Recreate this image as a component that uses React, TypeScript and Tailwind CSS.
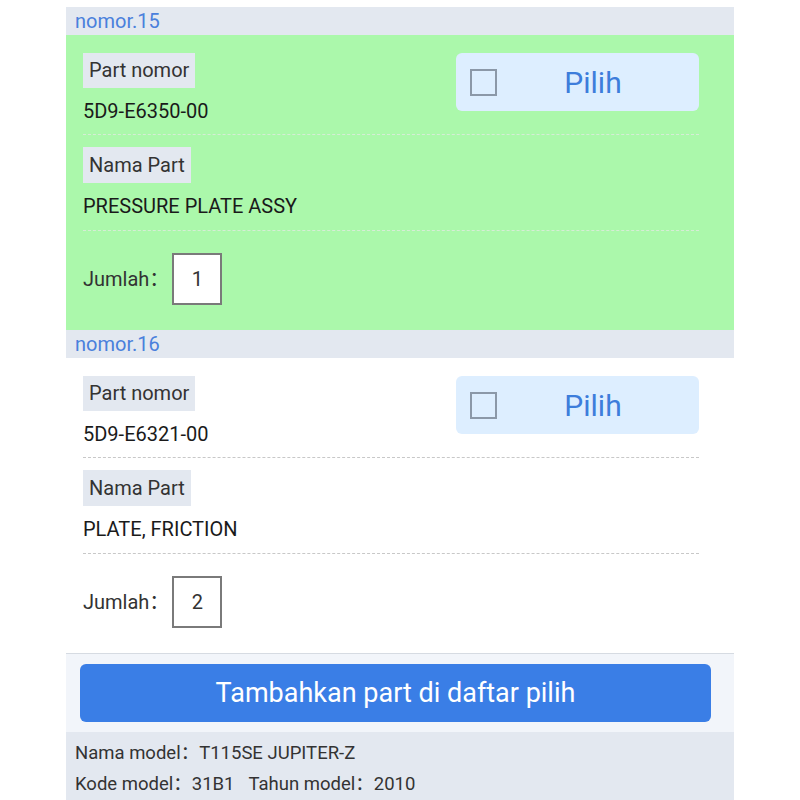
import React from 'react';

type Part = {
  no: number;
  partNo: string;
  name: string;
  qty: number;
  selected: boolean;
};

const parts: Part[] = [
  { no: 15, partNo: '5D9-E6350-00', name: 'PRESSURE PLATE ASSY', qty: 1, selected: true },
  { no: 16, partNo: '5D9-E6321-00', name: 'PLATE, FRICTION', qty: 2, selected: false },
];

const PartItem: React.FC<{ part: Part }> = ({ part }) => (
  <div>
    <div className="h-[28px] bg-[#e3e8f0] pl-[9px] text-[20px] leading-[28px] text-[#4a80dc]">
      nomor.{part.no}
    </div>
    <div className={`pl-[17px] pr-[35px] pt-[18px] ${part.selected ? 'bg-[#abf8ab]' : 'bg-white'}`}>
      <div className={`flex justify-between border-b border-dashed ${part.selected ? 'border-[#d6ecd6]' : 'border-[#c8c8c8]'}`}>
        <div>
          <span className="inline-block h-[35px] bg-[#e3e8f0] px-[6px] text-[20px] leading-[35px] text-[#333]">Part nomor</span>
          <div className="h-[46px] text-[20px] leading-[47px] text-[#1a1a1a]">{part.partNo}</div>
        </div>
        <button className="flex h-[58px] w-[243px] items-center rounded-[6px] bg-[#ddeeff] pl-[14px]">
          <span className="h-[27px] w-[27px] border-2 border-[#8b98a8]" />
          <span className="flex-1 pr-[10px] text-center text-[30px] text-[#3d7ddb]">Pilih</span>
        </button>
      </div>
      <div className={`mt-[12px] border-b border-dashed ${part.selected ? 'border-[#d6ecd6]' : 'border-[#c8c8c8]'}`}>
        <span className="inline-block h-[36px] bg-[#e3e8f0] px-[6px] text-[20px] leading-[36px] text-[#333]">Nama Part</span>
        <div className="h-[47px] text-[20px] leading-[47px] text-[#1a1a1a]">{part.name}</div>
      </div>
      <div className="flex items-center pb-[25px] pt-[22px]">
        <span className="text-[20px] text-[#333]">Jumlah：</span>
        <span className="ml-[3px] flex h-[52px] w-[50px] items-center justify-center border-2 border-[#7a7a7a] bg-white text-[20px] text-[#333]">
          {part.qty}
        </span>
      </div>
    </div>
  </div>
);

export default function App() {
  return (
    <div
      className="min-h-[800px] bg-white pt-[7px]"
      style={{ fontFamily: 'Roboto, "Noto Sans CJK SC", sans-serif' }}
    >
      <div className="mx-[66px] w-[668px]">
        {parts.map(p => (
          <PartItem key={p.no} part={p} />
        ))}
        <div className="border-t border-[#d6dbe2] bg-[#f2f5fa] py-[10px] pl-[14px] pr-[23px]">
          <button className="h-[58px] w-full rounded-[6px] bg-[#3a7ee6] text-[27px] text-white">
            Tambahkan part di daftar pilih
          </button>
        </div>
        <div className="h-[68px] bg-[#e3e8f0] px-[9px] pt-[6px] text-[18.5px] leading-[31px] text-[#333]">
          <div>Nama model：T115SE JUPITER-Z</div>
          <div>
            Kode model：31B1<span className="ml-[14px]">Tahun model：2010</span>
          </div>
        </div>
      </div>
    </div>
  );
}
